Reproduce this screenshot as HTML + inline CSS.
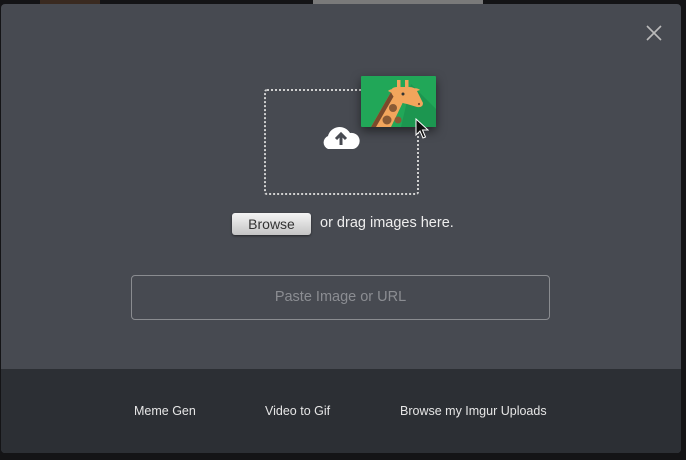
<!DOCTYPE html>
<html><head><style>
body{margin:0;width:686px;height:460px;background:#141416;position:relative;overflow:hidden;font-family:"Liberation Sans",sans-serif}
.bgt{position:absolute;top:0;height:6px}
.modal{position:absolute;left:1px;top:4px;width:680px;height:449px;background:#474a51;border-radius:4px;overflow:hidden}
.foot{position:absolute;left:0;top:365px;width:100%;height:84px;background:#2c2f34;color:#e6e6e6;font-size:12.5px}
.foot span{position:absolute;top:35px}
.drop{position:absolute;left:263px;top:85px;width:151px;height:102px;border:2px dotted #d0d0d0;border-radius:3px}
.btn{position:absolute;left:231px;top:209px;width:79px;height:22px;border-radius:3px;background:linear-gradient(#f4f4f4,#c4c4c4);color:#333;font-size:14px;text-align:center;line-height:22px;box-shadow:0 1px 2px rgba(0,0,0,.5)}
.drag{position:absolute;left:319px;top:211px;color:#eee;font-size:14.5px}
.inp{position:absolute;left:130px;top:271px;width:417px;height:43px;border:1px solid #8a8c90;border-radius:4px;color:#8b8d92;font-size:14.5px;text-align:center;line-height:43px}
.x{position:absolute;left:644px;top:20px}
</style></head><body>
<div class="bgt" style="left:40px;width:60px;background:#3a2a20"></div>
<div class="bgt" style="left:313px;width:170px;background:#7a7a7a"></div>
<div class="modal">
<svg class="x" width="18" height="18"><path d="M2 2L16 16M16 2L2 16" stroke="#bbb" stroke-width="1.6"/></svg>
<div class="drop"></div>
<svg style="position:absolute;left:319px;top:119px" width="42" height="28" viewBox="0 0 42 28"><path d="M8 26a7 7 0 0 1 0-13a12 12 0 0 1 22-3a8 8 0 0 1 3 16z" fill="#fff"/><path d="M21 22V12M16 16l5-5 5 5" stroke="#474a51" stroke-width="3" fill="none"/></svg>
<svg style="position:absolute;left:360px;top:72px;filter:drop-shadow(0 4px 5px rgba(0,0,0,.5))" width="75" height="51" viewBox="0 0 75 51">
<rect width="75" height="51" rx="1" fill="#21a758"/>
<path d="M50 8L75 33V51H40z" fill="#1c9650"/>
<path d="M10 51L30 16L44 22L30 51z" fill="#f2a55c"/>
<path d="M10 51L30 16L34 18L15 51z" fill="#7a4a2c"/>
<circle cx="26" cy="44" r="4.5" fill="#8a5a35"/><circle cx="32" cy="32" r="4" fill="#8a5a35"/><circle cx="37" cy="44" r="3.5" fill="#8a5a35"/>
<rect x="36" y="4" width="3.5" height="9" fill="#f2a55c"/><rect x="44" y="4" width="3.5" height="9" fill="#f2a55c"/>
<path d="M30 16Q30 11 36 11L48 11Q54 11 56 15L62 27Q62 32 56 31L46 28Q34 26 30 16z" fill="#f2a55c"/>
<path d="M27 15Q30 12 34 14L31 17z" fill="#f2a55c"/><path d="M50 13Q56 11 59 14L53 16z" fill="#f2a55c"/>
<circle cx="42" cy="18" r="1.5" fill="#333"/><circle cx="58" cy="28" r="1.1" fill="#7a4a2c"/>
</svg>
<svg style="position:absolute;left:414px;top:114px" width="14" height="22" viewBox="0 0 14 22"><path d="M1 1V17L5 13L8 20L10.5 19L7.5 12H13z" fill="#111" stroke="#fff" stroke-width="1"/></svg>
<div class="btn">Browse</div>
<div class="drag">or drag images here.</div>
<div class="inp">Paste Image or URL</div>
<div class="foot"><span style="left:133px">Meme Gen</span><span style="left:264px">Video to Gif</span><span style="left:399px">Browse my Imgur Uploads</span></div>
</div>
</body></html>
